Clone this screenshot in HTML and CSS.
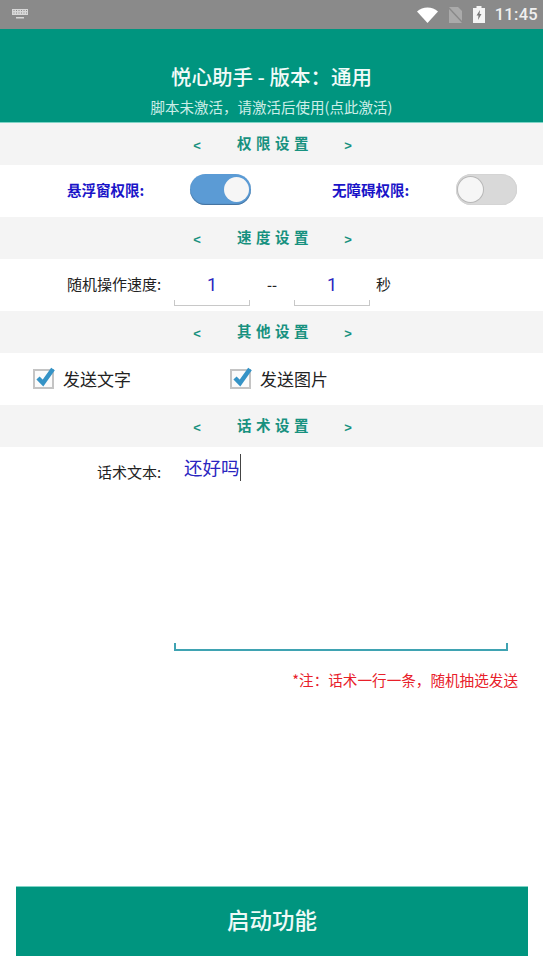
FILE: index.html
```html
<!DOCTYPE html>
<html lang="zh-CN">
<head>
<meta charset="utf-8">
<title>悦心助手</title>
<link rel="stylesheet" href="styles.css">
</head>
<body>
<div class="app">
  <div class="status">
    <svg class="kbd" width="18" height="10" viewBox="0 0 18 10"><path d="M1 0h16v6H1z" fill="#d8d8d8"/><path d="M2.5 1.5h1M5 1.5h1M7.5 1.5h1M10 1.5h1M12.500 1.500h1M15 1.500h1M2.500 4h1M5 4h1M7.500 4h1M10 4h1M12.500 4h1M15 4h1" stroke="#8a8a8a" stroke-width="1"/><path d="M5 8h8v1.500H5z" fill="#d8d8d8"/></svg>
    <div class="status-right">
      <svg width="21" height="16" viewBox="0 0 21 16"><path d="M0 4.500C3 1.800 6.500.5 10.500.5S18 1.800 21 4.500L10.500 16z" fill="#fff"/></svg>
      <svg class="sim" width="15" height="16" viewBox="0 0 15 16"><path d="M1 0h9l4 4v12H1z" fill="#aaa"/><path d="M0 0l15 16" stroke="#8a8a8a" stroke-width="1.500"/></svg>
      <svg class="batt" width="12" height="17" viewBox="0 0 12 17"><path d="M3.500 0h5v2H12v15H0V2h3.500z" fill="#f4f4f4"/><path d="M7 4L3.500 9.500h2L5 14l3.500-6h-2z" fill="#777"/></svg>
      <span class="time">11:45</span>
    </div>
  </div>
  <header class="head">
    <h1>悦心助手 - 版本：通用</h1>
    <p>脚本未激活，请激活后使用(点此激活)</p>
  </header>

  <div class="sec"><span class="arr">&lt;</span><span class="sec-t">权限设置</span><span class="arr">&gt;</span></div>
  <div class="row perm">
    <span class="perm-l">悬浮窗权限:</span>
    <span class="sw on"><i></i></span>
    <span class="perm-l second">无障碍权限:</span>
    <span class="sw off"><i></i></span>
  </div>

  <div class="sec"><span class="arr">&lt;</span><span class="sec-t">速度设置</span><span class="arr">&gt;</span></div>
  <div class="row speed">
    <span class="lab">随机操作速度:</span>
    <span class="inp">1</span>
    <span class="dash">--</span>
    <span class="inp">1</span>
    <span class="unit">秒</span>
  </div>

  <div class="sec"><span class="arr">&lt;</span><span class="sec-t">其他设置</span><span class="arr">&gt;</span></div>
  <div class="row checks">
    <span class="chk"><svg width="24" height="24" viewBox="0 0 24 24"><rect x="1" y="5" width="19" height="18" fill="#fbfbfb" stroke="#c4c4c4" stroke-width="2"/><path d="M5 13l5 5L20 4" fill="none" stroke="#3593c6" stroke-width="4.500"/></svg>发送文字</span>
    <span class="chk"><svg width="24" height="24" viewBox="0 0 24 24"><rect x="1" y="5" width="19" height="18" fill="#fbfbfb" stroke="#c4c4c4" stroke-width="2"/><path d="M5 13l5 5L20 4" fill="none" stroke="#3593c6" stroke-width="4.500"/></svg>发送图片</span>
  </div>

  <div class="sec"><span class="arr">&lt;</span><span class="sec-t">话术设置</span><span class="arr">&gt;</span></div>
  <div class="talk">
    <span class="lab talk-l">话术文本:</span>
    <div class="area"><span class="area-t">还好吗</span></div>
  </div>
  <p class="note">*注：话术一行一条，随机抽选发送</p>

  <button class="go">启动功能</button>
</div>
</body>
</html>
```
FILE: styles.css
```css
* { box-sizing: border-box; }
html, body { margin: 0; padding: 0; }
body { font-family: "Noto Sans CJK SC", "Noto Sans", sans-serif; background: #fff; color: #222; }
.app { width: 543px; height: 961px; display: flex; flex-direction: column; overflow: hidden; }

.status { height: 29px; background: #8a8a8a; display: flex; align-items: center; justify-content: space-between; padding: 0 5px 0 11px; }
.kbd { margin-top: -1px; }
.status-right { display: flex; align-items: center; }
.sim { margin-left: 10px; }
.batt { margin-left: 10px; }
.time { margin-left: 10px; font: 500 16.500px/29px Roboto, sans-serif; color: #f0f0f0; letter-spacing: .3px; }

.head { height: 94px; background: #00957f; color: #fff; text-align: center; padding-top: 33px; border-bottom: 1px solid #7fd4c6; }
.head h1 { margin: 0; font-size: 20.500px; line-height: 28px; font-weight: 500; color: #f2fbf9; }
.head p { margin: 6px 0 0; font-size: 14.500px; line-height: 22px; font-weight: 400; color: #cdeee8; }

.sec { height: 42px; background: #f4f4f4; display: flex; align-items: center; justify-content: center; padding-left: 2px; color: #17917f; font-weight: 700; }
.sec-t { width: 78px; margin: 0 29px 3px 36px; font-size: 14.500px; letter-spacing: 4.500px; white-space: nowrap; }
.arr { width: 8px; padding-top: 2px; font: 700 13px/1 "Liberation Sans", sans-serif; text-align: center; }

.row { height: 52px; display: flex; align-items: center; background: #fff; }
.lab { font-size: 15px; color: #222; white-space: nowrap; margin-bottom: 3px; }

.perm { padding-left: 67px; padding-bottom: 3px; }
.perm-l { width: 123px; font-size: 14.500px; font-weight: 700; color: #1a14c8; white-space: nowrap; }
.second { width: 124px; margin-left: 81px; }
.sw { width: 61px; height: 31px; border-radius: 16px; position: relative; display: block; }
.sw i { position: absolute; top: 3px; width: 25px; height: 25px; border-radius: 50%; background: #f6f6f6; }
.on { background: #5b9bd5; box-shadow: inset 0 -1px 1px #44719c; }
.on i { right: 2px; }
.off { background: #d9d9d9; box-shadow: inset 0 0 1px #aaa; }
.off i { left: 2px; box-shadow: 0 0 0 1px #b8b8b8; }

.speed { padding-left: 67px; }
.speed .lab { width: 107px; }
.inp { width: 76px; height: 45px; margin-bottom: 4px; padding-top: 11px; text-align: center; font: 400 18px/26px Roboto, sans-serif; color: #2a25c0; border-bottom: 1px solid #c8c8c8; position: relative; }
.inp::before, .inp::after { content: ""; position: absolute; bottom: 0; width: 1px; height: 5px; background: #c8c8c8; }
.inp::before { left: 0; }
.inp::after { right: 0; }
.dash { width: 44px; text-align: center; font-size: 14px; font-weight: 500; margin-bottom: 2px; }
.unit { margin-left: 6px; font-size: 15px; margin-bottom: 3px; }

.checks { gap: 0; padding-left: 33px; }
.chk { width: 197px; padding-bottom: 2px; display: flex; align-items: center; gap: 6px; font-size: 17px; color: #222; white-space: nowrap; }
.chk svg { margin-top: -2px; }

.talk { display: flex; height: 204px; padding-left: 97px; background: #fff; }
.talk-l { width: 77px; padding-top: 14px; line-height: 22px; }
.area { width: 334px; height: 204px; border-bottom: 2px solid #3fa3b2; position: relative; padding: 7px 0 0 10px; }
.area::before, .area::after { content: ""; position: absolute; bottom: 0; width: 2px; height: 6px; background: #3fa3b2; }
.area::before { left: 0; }
.area::after { right: 0; }
.area-t { display: inline-block; font-size: 18.500px; line-height: 27px; color: #2a25c0; border-right: 1px solid #444; }

.note { margin: 18px 25px 0 0; font-size: 14.600px; line-height: 22px; color: #e8202a; text-align: right; }

.go { margin: auto 15px 5px 16px; height: 70px; width: 512px; border: 0; border-top: 1px solid #7fd4c6; background: #00957f; color: #eefaf7; font: 500 22.500px/1 "Noto Sans CJK SC", sans-serif; padding: 0 0 5px; }
```
